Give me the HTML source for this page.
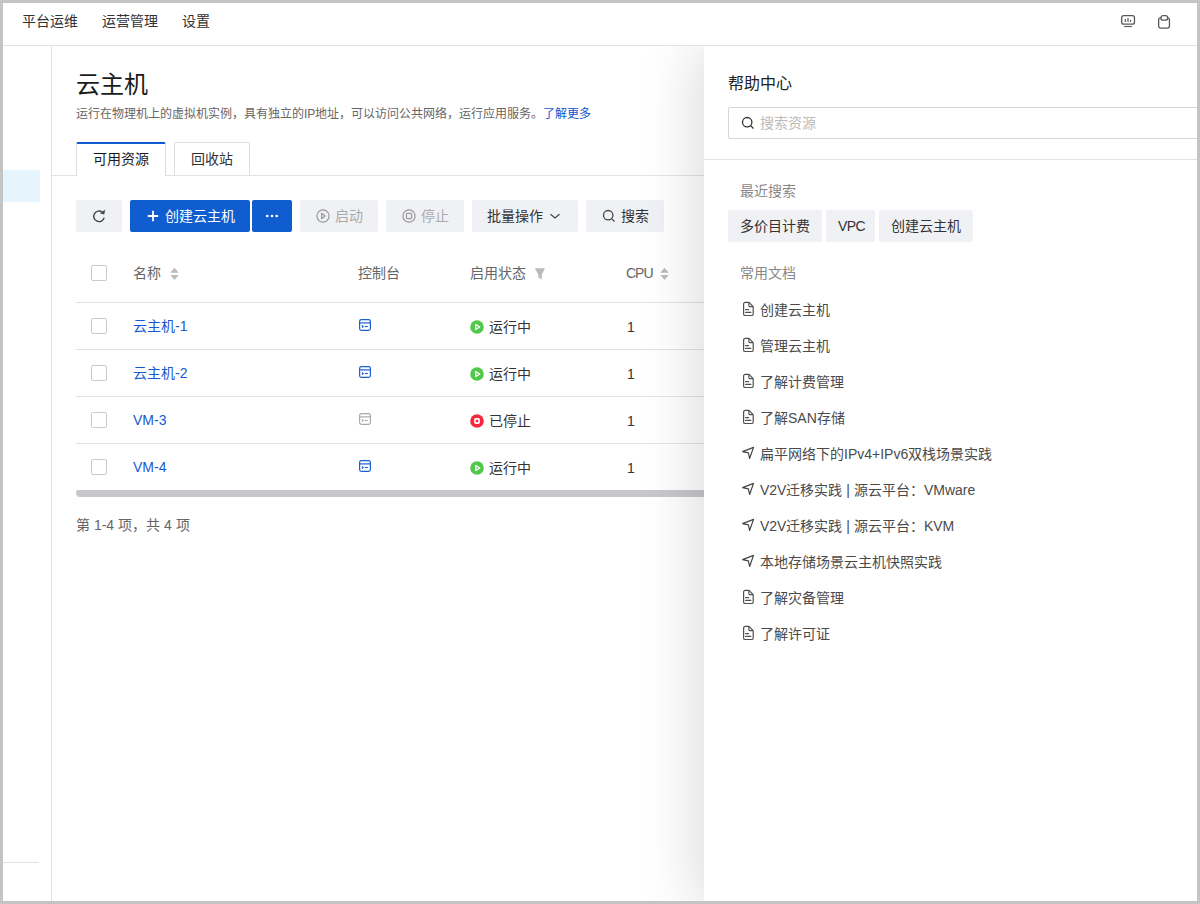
<!DOCTYPE html>
<html lang="zh-CN"><head><meta charset="utf-8">
<style>
*{box-sizing:border-box;margin:0;padding:0}
html,body{width:1200px;height:904px;overflow:hidden;background:#fff}
body{font-family:"Liberation Sans",sans-serif;color:#333;position:relative}
.a{position:absolute}
.t{position:absolute;white-space:nowrap;line-height:1}
.frame{position:absolute;left:0;top:0;width:1200px;height:904px;border:3px solid #c4c4c4;z-index:50;pointer-events:none}
.ln{position:absolute;background:#e1e2e6}
.btn{position:absolute;top:200px;height:32px;background:#f0f1f5;border-radius:2px}
.bt{position:absolute;top:9px;font-size:14px;line-height:1;white-space:nowrap}
.ck{position:absolute;left:91px;width:16px;height:16px;border:1px solid #c9cacf;border-radius:2px;background:#fff}
.nm{position:absolute;left:133px;font-size:14px;color:#1559d2;line-height:1;white-space:nowrap}
.st{position:absolute;left:489px;font-size:14px;color:#333;line-height:1;white-space:nowrap}
.cpu{position:absolute;left:627px;font-size:14px;color:#333;line-height:1}
.th{position:absolute;top:266px;font-size:14px;color:#666;line-height:1;white-space:nowrap}
svg{position:absolute;overflow:visible}
.panel{position:absolute;left:704px;top:0px;width:600px;height:860px;background:#fff;box-shadow:-6px 0 56px rgba(0,0,0,.15);z-index:10}
.pt{position:absolute;white-space:nowrap;line-height:1;font-size:14px}
.tag{position:absolute;top:164px;height:32px;background:#f0f1f5;border-radius:2px;font-size:14px;color:#333;line-height:32px;padding:0 12px;white-space:nowrap}
.doc{position:absolute;left:56px;font-size:14px;color:#4a4a4a;white-space:nowrap;line-height:1}
</style></head>
<body>
<div class="frame"></div>
<!-- header -->
<div class="ln" style="left:0;top:45px;width:1200px;height:1px"></div>
<div class="t" style="left:22px;top:14px;font-size:14px;color:#333">平台运维</div>
<div class="t" style="left:102px;top:14px;font-size:14px;color:#333">运营管理</div>
<div class="t" style="left:182px;top:14px;font-size:14px;color:#333">设置</div>
<svg style="left:1120px;top:13px" width="18" height="16" viewBox="0 0 18 16">
  <rect x="1.75" y="2.55" width="12.7" height="8.6" rx="2" fill="none" stroke="#595959" stroke-width="1.3"/>
  <line x1="4" y1="13.5" x2="12" y2="13.5" stroke="#595959" stroke-width="1.1"/>
  <line x1="5.3" y1="6" x2="5.3" y2="8.9" stroke="#595959" stroke-width="1.2"/>
  <line x1="8" y1="5.1" x2="8" y2="8.9" stroke="#595959" stroke-width="1.2"/>
  <line x1="10.5" y1="6.9" x2="10.5" y2="8.9" stroke="#595959" stroke-width="1.2"/>
</svg>
<svg style="left:1156px;top:13px" width="18" height="18" viewBox="0 0 18 18">
  <rect x="2.65" y="4.8" width="10.8" height="10.3" rx="2" fill="none" stroke="#595959" stroke-width="1.3"/>
  <rect x="5" y="2.6" width="6.6" height="4.6" rx="2" fill="#fff" stroke="#595959" stroke-width="1.3"/>
</svg>
<!-- sidebar -->
<div class="ln" style="left:51px;top:46px;width:1px;height:858px"></div>
<div class="a" style="left:3px;top:170px;width:37px;height:32px;background:#e6f5fd;border-radius:0 2px 2px 0"></div>
<div class="ln" style="left:3px;top:862px;width:36px;height:1px"></div>
<!-- content -->
<div class="t" style="left:76px;top:73px;font-size:24px;color:#1a1a1a">云主机</div>
<div class="t" style="left:76px;top:108px;font-size:12px;color:#666">运行在物理机上的虚拟机实例，具有独立的IP地址，可以访问公共网络，运行应用服务。<span style="color:#0f55d0;letter-spacing:-0.1px">了解更多</span></div>
<!-- tabs -->
<div class="ln" style="left:52px;top:175px;width:660px;height:1px"></div>
<div class="a" style="left:76px;top:142px;width:90px;height:34px;border:1px solid #dcdde2;border-top:2px solid #0f5cd1;border-bottom:none;background:#fff;border-radius:2px 2px 0 0"></div>
<div class="t" style="left:93px;top:152px;font-size:14px;color:#1a1a1a">可用资源</div>
<div class="a" style="left:174px;top:142px;width:76px;height:33px;border:1px solid #dcdde2;border-bottom:none;background:#fff;border-radius:2px 2px 0 0"></div>
<div class="t" style="left:191px;top:152px;font-size:14px;color:#333">回收站</div>
<!-- toolbar -->
<div class="btn" style="left:76px;width:46px">
  <svg style="left:15px;top:8px" width="16" height="16" viewBox="0 0 16 16">
    <path d="M13.2 9.6 A5.3 5.3 0 1 1 11.4 4.2" fill="none" stroke="#444" stroke-width="1.4"/>
    <path d="M9.3 5.2 L13.9 2.1 L13.1 6.2 Z" fill="#444" stroke="#444" stroke-width="0.4" stroke-linejoin="round"/>
  </svg>
</div>
<div class="btn" style="left:130px;width:120px;background:#105dd0">
  <svg style="left:18px;top:10px" width="12" height="12" viewBox="0 0 12 12">
    <path d="M5 0.8 V11.2 M-0.2 6 H10.2" stroke="#fff" stroke-width="1.8"/>
  </svg>
  <div class="bt" style="left:35px;color:#fff">创建云主机</div>
</div>
<div class="btn" style="left:252px;width:40px;background:#105dd0">
  <svg style="left:13px;top:14px" width="14" height="4" viewBox="0 0 14 4">
    <circle cx="2.2" cy="2" r="1.35" fill="#fff"/><circle cx="7" cy="2" r="1.35" fill="#fff"/><circle cx="11.7" cy="2" r="1.35" fill="#fff"/>
  </svg>
</div>
<div class="btn" style="left:300px;width:78px">
  <svg style="left:15px;top:8px" width="16" height="16" viewBox="0 0 16 16">
    <circle cx="8" cy="8" r="6.1" fill="none" stroke="#999" stroke-width="1.2"/>
    <path d="M6.6 5.3 L10.2 8 L6.6 10.7 Z" fill="none" stroke="#999" stroke-width="1.2" stroke-linejoin="round"/>
  </svg>
  <div class="bt" style="left:35px;color:#aaa">启动</div>
</div>
<div class="btn" style="left:386px;width:78px">
  <svg style="left:15px;top:8px" width="16" height="16" viewBox="0 0 16 16">
    <circle cx="8" cy="8" r="6.1" fill="none" stroke="#999" stroke-width="1.2"/>
    <rect x="5.4" y="5.4" width="5.2" height="5.2" rx="1" fill="none" stroke="#999" stroke-width="1.2"/>
  </svg>
  <div class="bt" style="left:35px;color:#aaa">停止</div>
</div>
<div class="btn" style="left:472px;width:106px">
  <div class="bt" style="left:15px;color:#333">批量操作</div>
  <svg style="left:76px;top:10px" width="12" height="12" viewBox="0 0 12 12">
    <path d="M2.5 4.3 L7 8 L11.5 4.3" fill="none" stroke="#444" stroke-width="1.3"/>
  </svg>
</div>
<div class="btn" style="left:586px;width:78px">
  <svg style="left:15px;top:8px" width="16" height="16" viewBox="0 0 16 16">
    <circle cx="7.2" cy="7.2" r="4.7" fill="none" stroke="#444" stroke-width="1.3"/>
    <path d="M10.6 10.6 L13.5 13.5" stroke="#444" stroke-width="1.3"/>
  </svg>
  <div class="bt" style="left:35px;color:#333">搜索</div>
</div>
<!-- table -->
<div class="ck" style="top:265px"></div>
<div class="th" style="left:133px">名称</div>
<svg style="left:170px;top:267px" width="10" height="14" viewBox="0 0 10 14">
  <path d="M0.3 5.7 L4.5 0.8 L8.7 5.7 Z M0.3 7.9 L4.5 13 L8.7 7.9 Z" fill="#bbb"/>
</svg>
<div class="th" style="left:358px">控制台</div>
<div class="th" style="left:470px">启用状态</div>
<svg style="left:534px;top:267px" width="12" height="14" viewBox="0 0 12 14">
  <path d="M0.8 1.3 H11 L7.8 7.5 V12.5 L4.3 10.5 V7.5 Z" fill="#bbb"/>
</svg>
<div class="th" style="left:626px;letter-spacing:-1px">CPU</div>
<svg style="left:660px;top:267px" width="10" height="14" viewBox="0 0 10 14">
  <path d="M0.3 5.7 L4.5 0.8 L8.7 5.7 Z M0.3 7.9 L4.5 13 L8.7 7.9 Z" fill="#bbb"/>
</svg>
<div class="ln" style="left:76px;top:302px;width:640px;height:1px"></div>
<div class="ln" style="left:76px;top:349px;width:640px;height:1px"></div>
<div class="ln" style="left:76px;top:396px;width:640px;height:1px"></div>
<div class="ln" style="left:76px;top:443px;width:640px;height:1px"></div>
<div class="a" style="left:76px;top:490px;width:640px;height:7px;background:#c6c8cc;border-radius:2px 0 0 4px"></div>

<div id="rows"></div>
<!-- row 1 -->
<div class="ck" style="top:318px"></div>
<div class="nm" style="top:319px">云主机-1</div>
<svg class="con" style="left:358px;top:318px" width="14" height="14" viewBox="0 0 14 14">
  <rect x="1.6" y="1.6" width="10.8" height="10.8" rx="1.8" fill="none" stroke="#1a5fd2" stroke-width="1.2"/>
  <line x1="1.6" y1="4.9" x2="12.4" y2="4.9" stroke="#1a5fd2" stroke-width="1.2"/>
  <path d="M3.9 7.3 L5.2 8.4 L3.9 9.5" fill="none" stroke="#1a5fd2" stroke-width="1.1"/>
  <line x1="6.8" y1="8.5" x2="9.8" y2="8.5" stroke="#1a5fd2" stroke-width="1.1"/>
</svg>
<svg style="left:470px;top:320px" width="14" height="14" viewBox="0 0 14 14">
  <circle cx="7" cy="7" r="6.8" fill="#52c84a"/>
  <path d="M5.8 4.5 L9.7 7 L5.8 9.5 Z" fill="none" stroke="#fff" stroke-width="1.3" stroke-linejoin="round"/>
</svg>
<div class="st" style="top:320px">运行中</div>
<div class="cpu" style="top:320px">1</div>
<!-- row 2 -->
<div class="ck" style="top:365px"></div>
<div class="nm" style="top:366px">云主机-2</div>
<svg style="left:358px;top:365px" width="14" height="14" viewBox="0 0 14 14">
  <rect x="1.6" y="1.6" width="10.8" height="10.8" rx="1.8" fill="none" stroke="#1a5fd2" stroke-width="1.2"/>
  <line x1="1.6" y1="4.9" x2="12.4" y2="4.9" stroke="#1a5fd2" stroke-width="1.2"/>
  <path d="M3.9 7.3 L5.2 8.4 L3.9 9.5" fill="none" stroke="#1a5fd2" stroke-width="1.1"/>
  <line x1="6.8" y1="8.5" x2="9.8" y2="8.5" stroke="#1a5fd2" stroke-width="1.1"/>
</svg>
<svg style="left:470px;top:367px" width="14" height="14" viewBox="0 0 14 14">
  <circle cx="7" cy="7" r="6.8" fill="#52c84a"/>
  <path d="M5.8 4.5 L9.7 7 L5.8 9.5 Z" fill="none" stroke="#fff" stroke-width="1.3" stroke-linejoin="round"/>
</svg>
<div class="st" style="top:367px">运行中</div>
<div class="cpu" style="top:367px">1</div>
<!-- row 3 -->
<div class="ck" style="top:412px"></div>
<div class="nm" style="top:413px">VM-3</div>
<svg style="left:358px;top:412px" width="14" height="14" viewBox="0 0 14 14">
  <rect x="1.6" y="1.6" width="10.8" height="10.8" rx="1.8" fill="none" stroke="#aaa" stroke-width="1.2"/>
  <line x1="1.6" y1="4.9" x2="12.4" y2="4.9" stroke="#aaa" stroke-width="1.2"/>
  <path d="M3.9 7.3 L5.2 8.4 L3.9 9.5" fill="none" stroke="#aaa" stroke-width="1.1"/>
  <line x1="6.8" y1="8.5" x2="9.8" y2="8.5" stroke="#aaa" stroke-width="1.1"/>
</svg>
<svg style="left:470px;top:414px" width="14" height="14" viewBox="0 0 14 14">
  <circle cx="7" cy="7" r="6.8" fill="#f5283c"/>
  <rect x="4.9" y="4.9" width="4.2" height="4.2" rx="0.8" fill="none" stroke="#fff" stroke-width="1.6"/>
</svg>
<div class="st" style="top:414px">已停止</div>
<div class="cpu" style="top:414px">1</div>
<!-- row 4 -->
<div class="ck" style="top:459px"></div>
<div class="nm" style="top:460px">VM-4</div>
<svg style="left:358px;top:459px" width="14" height="14" viewBox="0 0 14 14">
  <rect x="1.6" y="1.6" width="10.8" height="10.8" rx="1.8" fill="none" stroke="#1a5fd2" stroke-width="1.2"/>
  <line x1="1.6" y1="4.9" x2="12.4" y2="4.9" stroke="#1a5fd2" stroke-width="1.2"/>
  <path d="M3.9 7.3 L5.2 8.4 L3.9 9.5" fill="none" stroke="#1a5fd2" stroke-width="1.1"/>
  <line x1="6.8" y1="8.5" x2="9.8" y2="8.5" stroke="#1a5fd2" stroke-width="1.1"/>
</svg>
<svg style="left:470px;top:461px" width="14" height="14" viewBox="0 0 14 14">
  <circle cx="7" cy="7" r="6.8" fill="#52c84a"/>
  <path d="M5.8 4.5 L9.7 7 L5.8 9.5 Z" fill="none" stroke="#fff" stroke-width="1.3" stroke-linejoin="round"/>
</svg>
<div class="st" style="top:461px">运行中</div>
<div class="cpu" style="top:461px">1</div>

<div class="t" style="left:76px;top:518px;font-size:14px;color:#666">第 1-4 项，共 4 项</div>

<!-- help panel -->
<div class="a" style="left:0;top:46px;width:1200px;height:858px;overflow:hidden;z-index:10"><div class="panel">
  <div class="pt" style="left:24px;top:30px;font-size:16px;color:#222">帮助中心</div>
  <div class="a" style="left:24px;top:61px;width:600px;height:32px;border:1px solid #d4d5da;border-radius:2px;background:#fff"></div>
  <svg style="left:36px;top:69px" width="16" height="16" viewBox="0 0 16 16">
    <circle cx="7.2" cy="7.2" r="4.7" fill="none" stroke="#333" stroke-width="1.3"/>
    <path d="M10.6 10.6 L13.5 13.5" stroke="#333" stroke-width="1.3"/>
  </svg>
  <div class="pt" style="left:56px;top:70px;color:#bbb">搜索资源</div>
  <div class="ln" style="left:0;top:113px;width:600px;height:1px"></div>
  <div class="pt" style="left:36px;top:138px;color:#888">最近搜索</div>
  <div class="tag" style="left:24px;width:94px">多价目计费</div>
  <div class="tag" style="left:122px;width:49px;letter-spacing:-0.6px">VPC</div>
  <div class="tag" style="left:175px;width:94px">创建云主机</div>
  <div class="pt" style="left:36px;top:220px;color:#888">常用文档</div>
  <svg style="left:38px;top:255px" width="14" height="16" viewBox="0 0 14 16"><path d="M1.6 3 A1.6 1.6 0 0 1 3.2 1.4 H7 L11.2 5.6 V12.9 A1.6 1.6 0 0 1 9.6 14.5 H3.2 A1.6 1.6 0 0 1 1.6 12.9 Z" fill="none" stroke="#505050" stroke-width="1.2" stroke-linejoin="round"/><path d="M6.9 1.6 V4.8 A0.9 0.9 0 0 0 7.8 5.7 H11" fill="none" stroke="#505050" stroke-width="1.2"/><path d="M3.6 8.6 H6.6 M3.6 11.4 H8.8" stroke="#505050" stroke-width="1.2" stroke-linecap="round"/></svg>
  <div class="doc" style="top:257px">创建云主机</div>
  <svg style="left:38px;top:291px" width="14" height="16" viewBox="0 0 14 16"><path d="M1.6 3 A1.6 1.6 0 0 1 3.2 1.4 H7 L11.2 5.6 V12.9 A1.6 1.6 0 0 1 9.6 14.5 H3.2 A1.6 1.6 0 0 1 1.6 12.9 Z" fill="none" stroke="#505050" stroke-width="1.2" stroke-linejoin="round"/><path d="M6.9 1.6 V4.8 A0.9 0.9 0 0 0 7.8 5.7 H11" fill="none" stroke="#505050" stroke-width="1.2"/><path d="M3.6 8.6 H6.6 M3.6 11.4 H8.8" stroke="#505050" stroke-width="1.2" stroke-linecap="round"/></svg>
  <div class="doc" style="top:293px">管理云主机</div>
  <svg style="left:38px;top:327px" width="14" height="16" viewBox="0 0 14 16"><path d="M1.6 3 A1.6 1.6 0 0 1 3.2 1.4 H7 L11.2 5.6 V12.9 A1.6 1.6 0 0 1 9.6 14.5 H3.2 A1.6 1.6 0 0 1 1.6 12.9 Z" fill="none" stroke="#505050" stroke-width="1.2" stroke-linejoin="round"/><path d="M6.9 1.6 V4.8 A0.9 0.9 0 0 0 7.8 5.7 H11" fill="none" stroke="#505050" stroke-width="1.2"/><path d="M3.6 8.6 H6.6 M3.6 11.4 H8.8" stroke="#505050" stroke-width="1.2" stroke-linecap="round"/></svg>
  <div class="doc" style="top:329px">了解计费管理</div>
  <svg style="left:38px;top:363px" width="14" height="16" viewBox="0 0 14 16"><path d="M1.6 3 A1.6 1.6 0 0 1 3.2 1.4 H7 L11.2 5.6 V12.9 A1.6 1.6 0 0 1 9.6 14.5 H3.2 A1.6 1.6 0 0 1 1.6 12.9 Z" fill="none" stroke="#505050" stroke-width="1.2" stroke-linejoin="round"/><path d="M6.9 1.6 V4.8 A0.9 0.9 0 0 0 7.8 5.7 H11" fill="none" stroke="#505050" stroke-width="1.2"/><path d="M3.6 8.6 H6.6 M3.6 11.4 H8.8" stroke="#505050" stroke-width="1.2" stroke-linecap="round"/></svg>
  <div class="doc" style="top:365px">了解SAN存储</div>
  <svg style="left:37px;top:399px" width="16" height="16" viewBox="0 0 16 16"><path d="M1.6 6.6 L12.5 2.4 L8.6 13.5 L7.4 7.8 Z" fill="none" stroke="#444" stroke-width="1.2" stroke-linejoin="round"/></svg>
  <div class="doc" style="top:401px">扁平网络下的IPv4+IPv6双栈场景实践</div>
  <svg style="left:37px;top:435px" width="16" height="16" viewBox="0 0 16 16"><path d="M1.6 6.6 L12.5 2.4 L8.6 13.5 L7.4 7.8 Z" fill="none" stroke="#444" stroke-width="1.2" stroke-linejoin="round"/></svg>
  <div class="doc" style="top:437px">V2V迁移实践 | 源云平台：VMware</div>
  <svg style="left:37px;top:471px" width="16" height="16" viewBox="0 0 16 16"><path d="M1.6 6.6 L12.5 2.4 L8.6 13.5 L7.4 7.8 Z" fill="none" stroke="#444" stroke-width="1.2" stroke-linejoin="round"/></svg>
  <div class="doc" style="top:473px">V2V迁移实践 | 源云平台：KVM</div>
  <svg style="left:37px;top:507px" width="16" height="16" viewBox="0 0 16 16"><path d="M1.6 6.6 L12.5 2.4 L8.6 13.5 L7.4 7.8 Z" fill="none" stroke="#444" stroke-width="1.2" stroke-linejoin="round"/></svg>
  <div class="doc" style="top:509px">本地存储场景云主机快照实践</div>
  <svg style="left:38px;top:543px" width="14" height="16" viewBox="0 0 14 16"><path d="M1.6 3 A1.6 1.6 0 0 1 3.2 1.4 H7 L11.2 5.6 V12.9 A1.6 1.6 0 0 1 9.6 14.5 H3.2 A1.6 1.6 0 0 1 1.6 12.9 Z" fill="none" stroke="#505050" stroke-width="1.2" stroke-linejoin="round"/><path d="M6.9 1.6 V4.8 A0.9 0.9 0 0 0 7.8 5.7 H11" fill="none" stroke="#505050" stroke-width="1.2"/><path d="M3.6 8.6 H6.6 M3.6 11.4 H8.8" stroke="#505050" stroke-width="1.2" stroke-linecap="round"/></svg>
  <div class="doc" style="top:545px">了解灾备管理</div>
  <svg style="left:38px;top:579px" width="14" height="16" viewBox="0 0 14 16"><path d="M1.6 3 A1.6 1.6 0 0 1 3.2 1.4 H7 L11.2 5.6 V12.9 A1.6 1.6 0 0 1 9.6 14.5 H3.2 A1.6 1.6 0 0 1 1.6 12.9 Z" fill="none" stroke="#505050" stroke-width="1.2" stroke-linejoin="round"/><path d="M6.9 1.6 V4.8 A0.9 0.9 0 0 0 7.8 5.7 H11" fill="none" stroke="#505050" stroke-width="1.2"/><path d="M3.6 8.6 H6.6 M3.6 11.4 H8.8" stroke="#505050" stroke-width="1.2" stroke-linecap="round"/></svg>
  <div class="doc" style="top:581px">了解许可证</div>
</div>
</div></body></html>
